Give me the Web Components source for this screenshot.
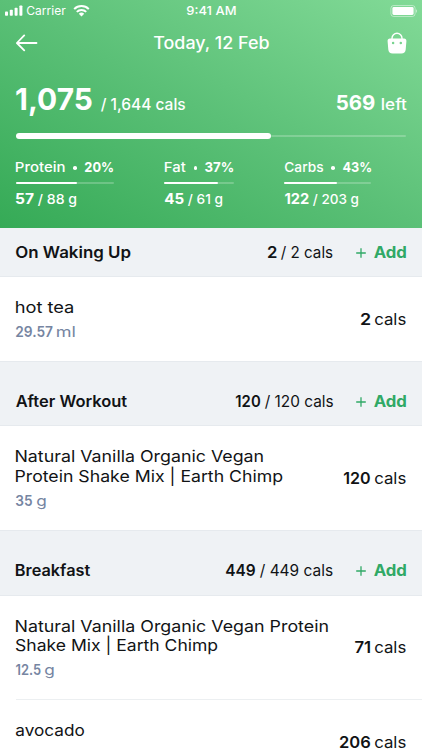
<!DOCTYPE html>
<html lang="en">
<head>
<meta charset="utf-8">
<meta name="viewport" content="width=device-width">
<title>Food diary</title>
<style>
html,body{margin:0;height:750px;overflow:hidden;background:#fff}
</style>
</head>
<body>
<diary-app></diary-app>
<script>
const mount = (el, html) => {
  if (!el.shadowRoot) el.attachShadow({mode:'open'}).innerHTML = html;
};
const pen = document.createElement('canvas').getContext('2d');

/* One run of text whose ink spans exactly `w` pixels. `m` is the gap before it. */
customElements.define('fit-text', class extends HTMLElement {
  connectedCallback(){
    mount(this, `<style>
      :host{display:inline-block;white-space:nowrap;flex:none}
      span{display:inline-block;transform-origin:0 50%}
    </style><span><slot></slot></span>`);
    const w = +this.getAttribute('w'), cs = getComputedStyle(this);
    pen.font = `${cs.fontWeight} ${parseFloat(cs.fontSize) * 10}px Inter`;
    const b = pen.measureText(this.textContent);
    const left = b.actualBoundingBoxLeft / 10, right = b.actualBoundingBoxRight / 10;
    const k = w / (left + right);
    this.style.width = w + 'px';
    this.style.marginLeft = (+this.getAttribute('m') || 0) + 'px';
    const s = this.shadowRoot.querySelector('span');
    s.style.transform = `translateX(${left * k}px) scaleX(${k})`;
  }
});

customElements.define('status-bar', class extends HTMLElement {
  connectedCallback(){ mount(this, `<style>
    :host{display:grid;grid-template-columns:1fr auto 1fr;height:20px;line-height:21px;font-size:12.3px;padding:0 4px 0 5px}
    .l{display:flex;align-items:center}.r{display:flex;justify-content:flex-end;align-items:center}
    svg{display:block}
  </style>
  <div class="l">
    <svg width="18" height="11" viewBox="0 0 18 11" fill="#fff"><rect y="6.5" width="3" height="4.3" rx=".8"/><rect x="4.8" y="4.8" width="3" height="6" rx=".8"/><rect x="9.6" y="2.8" width="3" height="8" rx=".8"/><rect x="14.4" y=".5" width="3" height="10.3" rx=".8"/></svg>
    <fit-text w="38.5" m="4.3" style="font-weight:400">Carrier</fit-text>
    <svg style="margin-left:7.2px" width="17" height="12" viewBox="0 0 17 12" fill="none" stroke="#fff" stroke-width="2"><path d="M1.2 4.1a10.4 10.4 0 0 1 14.6 0"/><path d="M3.8 6.9a6.6 6.6 0 0 1 9.4 0"/><path d="M8.5 11.6 5.8 8.8a3.9 3.9 0 0 1 5.4 0z" fill="#fff" stroke="none"/></svg>
  </div>
  <fit-text w="48.5" style="font-weight:500">9:41 AM</fit-text>
  <div class="r"><svg width="28" height="12" viewBox="0 0 28 12"><rect x=".9" y=".5" width="24.2" height="11" rx="2.8" fill="none" stroke="#fff" stroke-opacity=".45"/><rect x="2.4" y="2" width="21.2" height="8" rx="1.4" fill="#fff"/><path d="M26 4.2c1.4.4 1.4 3.2 0 3.6z" fill="#fff" fill-opacity=".5"/></svg></div>`); }
});

customElements.define('nav-bar', class extends HTMLElement {
  connectedCallback(){ mount(this, `<style>
    :host{display:grid;grid-template-columns:1fr auto 1fr;align-items:center;height:46px;padding:0 15.5px;font-size:16.8px;line-height:20px}
    svg{display:block}.r{justify-self:end}
  </style>
  <svg width="22" height="18" viewBox="0 0 22 18" fill="none" stroke="#fff" stroke-width="1.8" stroke-linecap="round" stroke-linejoin="round"><path d="M20.5 9H1M8.2 1.4.9 9l7.3 7.4"/></svg>
  <fit-text w="115">Today, 12 Feb</fit-text>
  <svg class="r" width="20" height="22" viewBox="0 0 20 22"><path d="M5 8V6.2a5 5 0 0 1 10 0V8" fill="none" stroke="#fff" stroke-width="1.4"/><path fill="#fff" fill-rule="evenodd" d="M3 6.6h14c1.6 0 2.5 1 2.4 2.6l-.7 8.4c-.2 2.5-1.8 4-4.3 4H5.6c-2.5 0-4.1-1.5-4.3-4L.6 9.2C.5 7.6 1.4 6.6 3 6.6zM6.1 9.8a1.25 1.25 0 1 0 0 2.5 1.25 1.25 0 0 0 0-2.5zm7.7 0a1.25 1.25 0 1 0 0 2.5 1.25 1.25 0 0 0 0-2.5z"/></svg>`); }
});

customElements.define('macro-stat', class extends HTMLElement {
  connectedCallback(){
    const [name,nw,pct,pw,val,vw,goal,gw,bar,track] = this.getAttribute('data').split('|');
    mount(this, `<style>
    :host{display:block;width:${track}px;font-size:13.7px;line-height:20px}
    .row{display:flex;align-items:baseline;height:20px;padding-left:.5px}
    .dot{width:3.6px;height:3.6px;border-radius:50%;background:#fff;margin:0 8.3px 0 8.5px;align-self:center;position:relative;top:1px}
    .track{height:2px;margin:5.5px 0 4.5px;background:rgba(255,255,255,.22);border-radius:1px}
    .bar{height:2px;width:${bar}px;background:#fff;border-radius:1px}
    b{font-size:15px;font-weight:700;display:contents}
  </style>
  <div class="row"><fit-text w="${nw}">${name}</fit-text><i class="dot"></i><fit-text w="${pw}" style="font-weight:700">${pct}</fit-text></div>
  <div class="track"><div class="bar"></div></div>
  <div class="row"><b><fit-text w="${vw}">${val}</fit-text></b><fit-text w="${gw}" m="4.5">${goal}</fit-text></div>`); }
});

customElements.define('calorie-summary', class extends HTMLElement {
  connectedCallback(){ mount(this, `<style>
    :host{display:block;padding:13px 16px 0 15.5px;font-size:15.5px}
    .top{display:flex;align-items:baseline;height:40px;line-height:40px}
    .big{font-size:30.5px;font-weight:700}.mid{font-size:20.3px;font-weight:700}
    .sp{flex:1}
    .progress{height:6px;margin-top:14.3px;display:flex;align-items:center}
    .done{width:255.5px;height:6px;border-radius:3px;background:#fff}
    .rest{flex:1;height:2px;background:rgba(255,255,255,.22);border-radius:1px}
    .macros{display:flex;margin-top:17.7px}
  </style>
  <div class="top"><fit-text class="big" w="75.5">1,075</fit-text><fit-text w="84" m="9.5">/ 1,644 cals</fit-text><div class="sp"></div><fit-text class="mid" w="37.5">569</fit-text><fit-text w="24.5" m="7.5">left</fit-text></div>
  <div class="progress"><div class="done"></div><div class="rest"></div></div>
  <div class="macros">
    <macro-stat data="Protein|48.5|20%|28|57|17.5|/ 88 g|38|61.5|98"></macro-stat>
    <macro-stat style="margin-left:50.5px" data="Fat|20.5|37%|28|45|18.5|/ 61 g|34|54|69.5"></macro-stat>
    <macro-stat style="margin-left:50.5px" data="Carbs|38|43%|28|122|23.5|/ 203 g|45|52.5|87"></macro-stat>
  </div>`); }
});

customElements.define('meal-header', class extends HTMLElement {
  connectedCallback(){
    const [title,tw,val,vw,goal,gw] = this.getAttribute('data').split('|');
    mount(this, `<style>
    :host{display:flex;box-sizing:border-box;align-items:flex-end;height:65.5px;padding:0 16.5px 13.5px 15.7px;background:#eff2f5;border-bottom:1px solid #e6eaee;font-size:15.7px;line-height:20px}
    :host(:not([first])){border-top:1px solid #e6eaee}
    :host([first]){height:49px}
    .row{display:flex;align-items:baseline;width:100%}
    .sp{flex:1}.s{font-weight:600}
    .add{color:#30a966;font-weight:700}
    svg{margin-left:23.5px;align-self:center}
  </style>
  <div class="row"><fit-text class="s" w="${tw}">${title}</fit-text><div class="sp"></div><fit-text class="s" w="${vw}">${val}</fit-text><fit-text w="${gw}" m="5" style="font-weight:400">${goal}</fit-text>
  <svg width="10" height="10" viewBox="0 0 10 10" stroke="#30a966" stroke-width="1.3"><path d="M5 .2v9.6M.2 5h9.6"/></svg><fit-text class="add" w="32" m="7.2">Add</fit-text></div>`); }
});

customElements.define('food-item', class extends HTMLElement {
  connectedCallback(){
    const lines = this.getAttribute('name').split('/').map(s => s.split(':'));
    const [amt,aw,unit,uw,cal,cw] = this.getAttribute('data').split('|');
    mount(this, `<style>
    :host{display:flex;box-sizing:border-box;align-items:center;justify-content:space-between;padding:3px 16.3px 0 15.8px;font-size:16.3px;line-height:19.6px;color:#111315}
    .name{display:flex;flex-direction:column;align-items:flex-start}
    .amount{display:flex;align-items:baseline;margin-top:5.5px;min-height:19.6px;font-size:14.6px;color:#7685a2}
    .cals{display:flex;align-items:baseline;line-height:14px;padding-bottom:3.5px}
    .s{font-weight:600}
  </style>
  <div><div class="name">${lines.map(([t,w]) => `<fit-text style="font-weight:400" w="${w}">${t}</fit-text>`).join('')}</div>
  <div class="amount">${amt ? `<fit-text class="s" w="${aw}">${amt}</fit-text><fit-text w="${uw}" m="5" style="font-weight:400">${unit}</fit-text>` : ''}</div></div>
  <div class="cals"><fit-text class="s" w="${cw}">${cal}</fit-text><fit-text w="30.5" m="5.7" style="font-weight:400">cals</fit-text></div>`); }
});

customElements.define('diary-app', class extends HTMLElement {
  connectedCallback(){ mount(this, `<style>
    :host{display:block;width:422px;height:750px;overflow:hidden;font-family:Inter,sans-serif;font-weight:500;color:#111315;background:#fff}
    header{height:228px;color:#fff;background:linear-gradient(to top right,#35aa56 0%,#5bc077 50%,#82da97 100%)}
    .rule{height:1px;margin-left:15.5px;background:#eceff1}
  </style>
  <header><status-bar></status-bar><nav-bar></nav-bar><calorie-summary></calorie-summary></header>
  <meal-header first data="On Waking Up|114.5|2|8.5|/ 2 cals|51.5"></meal-header>
  <food-item style="height:83.5px" name="hot tea:57" data="29.57|36.5|ml|17.5|2|9"></food-item>
  <meal-header data="After Workout|111|120|24|/ 120 cals|68"></meal-header>
  <food-item style="height:104px" name="Natural Vanilla Organic Vegan:247/Protein Shake Mix | Earth Chimp:266.5" data="35|16|g|8.5|120|26"></food-item>
  <meal-header data="Breakfast|74|449|29|/ 449 cals|72.5"></meal-header>
  <food-item style="height:103.5px" name="Natural Vanilla Organic Vegan Protein:312/Shake Mix | Earth Chimp:201.5" data="12.5|24.5|g|8.5|71|15"></food-item>
  <div class="rule"></div>
  <food-item style="height:84px" name="avocado:68" data="||||206|30"></food-item>`); }
});
</script>
</body>
</html>
